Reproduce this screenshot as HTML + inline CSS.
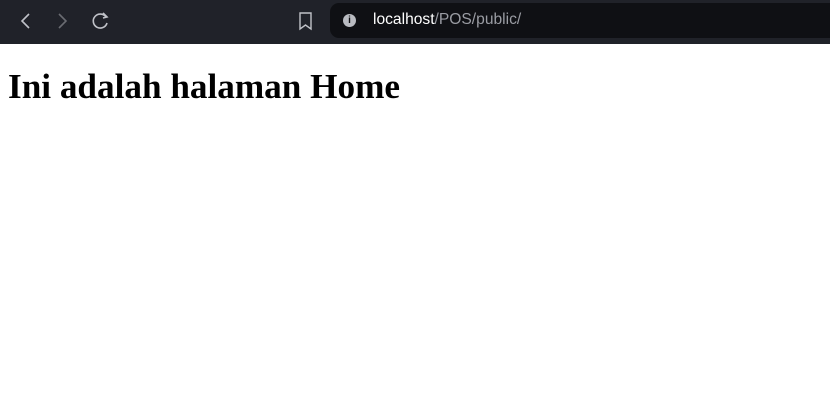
<!DOCTYPE html>
<html><head><style>
html,body{margin:0;padding:0;width:830px;height:401px;overflow:hidden;background:#fff}
.bar{position:absolute;left:0;top:0;width:830px;height:44px;background:#202229}
.url{position:absolute;left:330px;top:3px;width:520px;height:35px;background:#0f1014;border-radius:9px}
.url span{position:absolute;left:43px;top:8px;font:15.6px "Liberation Sans",sans-serif;color:#9a9ca3}
.url b{font-weight:normal;color:#fff}
.info{position:absolute;left:13px;top:11px;width:13px;height:13px;border-radius:50%;background:#b9bbc1;color:#0f1014;font:bold 10px "Liberation Sans",sans-serif;text-align:center;line-height:13px}
svg{position:absolute}
h1{position:absolute;left:8px;top:44px;margin:23px 0 0;font:bold 35.2px "Liberation Serif",serif;color:#000;white-space:nowrap}
</style></head><body>
<div class="bar">
<svg width="830" height="44" style="left:0;top:0">
<path d="M29 14 L22 21 L29 28" stroke="#c0c2c8" stroke-width="1.6" fill="none"/>
<path d="M59 14 L66 21 L59 28" stroke="#6a6c72" stroke-width="1.6" fill="none"/>
<path d="M106 17 A7 7 0 1 0 107 23" stroke="#c0c2c8" stroke-width="1.6" fill="none"/>
<path d="M103 13 L107 17 L103 18" stroke="#c0c2c8" stroke-width="1.6" fill="none"/>
<path d="M300 13 L311 13 L311 29 L305.5 25 L300 29 Z" stroke="#c0c2c8" stroke-width="1.4" fill="none"/>
</svg>
<div class="url"><div class="info">i</div><span><b>localhost</b>/POS/public/</span></div>
</div>
<h1>Ini adalah halaman Home</h1>
</body></html>
